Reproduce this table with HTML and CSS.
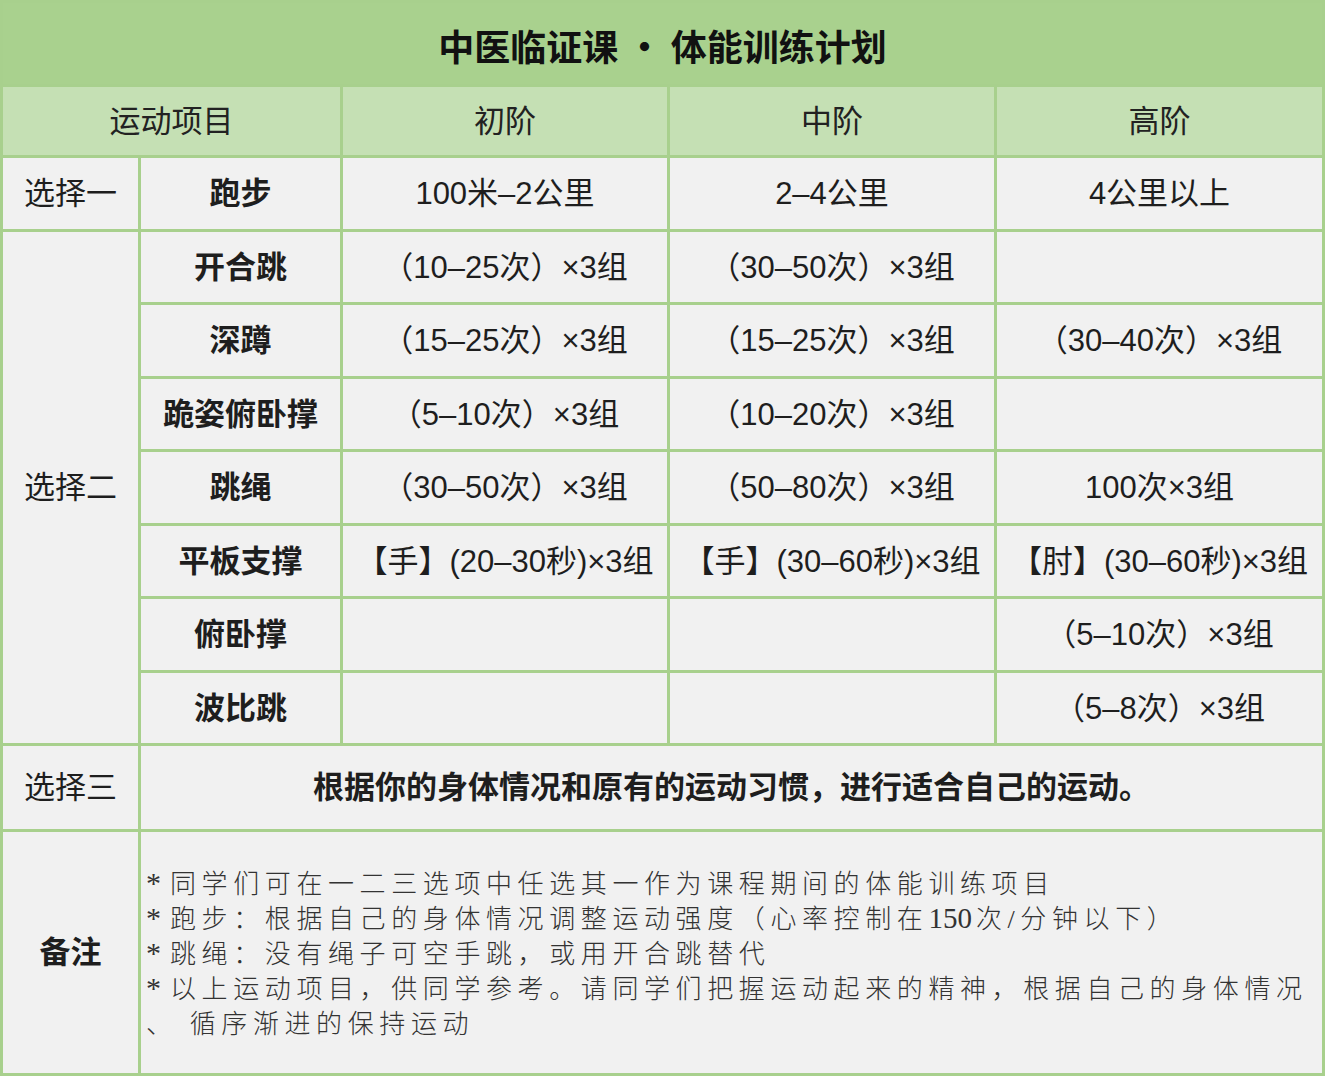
FILE: index.html
```html
<!DOCTYPE html>
<html lang="zh-CN">
<head>
<meta charset="utf-8">
<title>中医临证课 · 体能训练计划</title>
<link rel="stylesheet" href="styles.css">
</head>
<body>
<div class="plan">
  <div class="cell title span-all">中医临证课 · 体能训练计划</div>

  <div class="cell head span-2">运动项目</div>
  <div class="cell head">初阶</div>
  <div class="cell head">中阶</div>
  <div class="cell head">高阶</div>

  <div class="cell">选择一</div>
  <div class="cell item">跑步</div>
  <div class="cell">100米–2公里</div>
  <div class="cell">2–4公里</div>
  <div class="cell">4公里以上</div>

  <div class="cell group">选择二</div>

  <div class="cell item">开合跳</div>
  <div class="cell">（10–25次）×3组</div>
  <div class="cell">（30–50次）×3组</div>
  <div class="cell"></div>

  <div class="cell item">深蹲</div>
  <div class="cell">（15–25次）×3组</div>
  <div class="cell">（15–25次）×3组</div>
  <div class="cell">（30–40次）×3组</div>

  <div class="cell item">跪姿俯卧撑</div>
  <div class="cell">（5–10次）×3组</div>
  <div class="cell">（10–20次）×3组</div>
  <div class="cell"></div>

  <div class="cell item">跳绳</div>
  <div class="cell">（30–50次）×3组</div>
  <div class="cell">（50–80次）×3组</div>
  <div class="cell">100次×3组</div>

  <div class="cell item">平板支撑</div>
  <div class="cell">【手】(20–30秒)×3组</div>
  <div class="cell">【手】(30–60秒)×3组</div>
  <div class="cell">【肘】(30–60秒)×3组</div>

  <div class="cell item">俯卧撑</div>
  <div class="cell"></div>
  <div class="cell"></div>
  <div class="cell">（5–10次）×3组</div>

  <div class="cell item">波比跳</div>
  <div class="cell"></div>
  <div class="cell"></div>
  <div class="cell">（5–8次）×3组</div>

  <div class="cell">选择三</div>
  <div class="cell item span-4">根据你的身体情况和原有的运动习惯，进行适合自己的运动。</div>

  <div class="cell item">备注</div>
  <div class="cell notes span-4">
    <div class="note-lines">
      <div class="line"><span class="star">*</span>同学们可在一二三选项中任选其一作为课程期间的体能训练项目</div>
      <div class="line"><span class="star">*</span>跑步：根据自己的身体情况调整运动强度（心率控制在<span class="num">150</span>次/分钟以下）</div>
      <div class="line"><span class="star">*</span>跳绳：没有绳子可空手跳，或用开合跳替代</div>
      <div class="line"><span class="star">*</span>以上运动项目，供同学参考。请同学们把握运动起来的精神，根据自己的身体情况</div>
      <div class="line">、 循序渐进的保持运动</div>
    </div>
  </div>
</div>
</body>
</html>
```

FILE: styles.css
```css
html, body {
  margin: 0;
  padding: 0;
  background: #ffffff;
}

body {
  font-family: "Liberation Sans", "Noto Sans CJK SC", sans-serif;
  color: #1e1e1e;
}

.plan {
  display: grid;
  width: max-content;
  grid-template-columns: 135px 199px 324px 324px 325px;
  grid-template-rows: 81px 68px 71px 70px 71px 70px 71px 70px 71px 70px 83px 241px;
  gap: 3px;
  padding: 3px;
  background: #a8d08d;
}

.cell {
  display: flex;
  align-items: center;
  justify-content: center;
  background: #f1f1f1;
  font-size: 31px;
  line-height: 1;
  white-space: nowrap;
  overflow: hidden;
}

.span-all { grid-column: 1 / -1; }
.span-2 { grid-column: span 2; }
.span-4 { grid-column: span 4; }
.group { grid-row: span 7; }

.title {
  background: #a9d18e;
  font-family: "Noto Sans CJK SC", sans-serif;
  font-size: 36px;
  font-weight: 700;
  color: #111;
  padding-top: 2px;
}

.head {
  background: #c5e0b4;
  color: #222;
}

.item {
  font-weight: 700;
}

.notes {
  justify-content: flex-start;
  padding-left: 5px;
}

.note-lines {
  font-family: "Liberation Serif", "Noto Sans CJK SC", serif;
  font-size: 26px;
  font-weight: 300;
  line-height: 35px;
  letter-spacing: 5.6px;
  color: #333333;
  padding-top: 3px;
}

.line {
  height: 35px;
}

.star {
  font-size: 30px;
  line-height: 10px;
  letter-spacing: 0;
  margin-right: 9px;
}

.num {
  font-size: 29px;
  line-height: 10px;
  letter-spacing: 0;
  margin-right: 4px;
}
```
